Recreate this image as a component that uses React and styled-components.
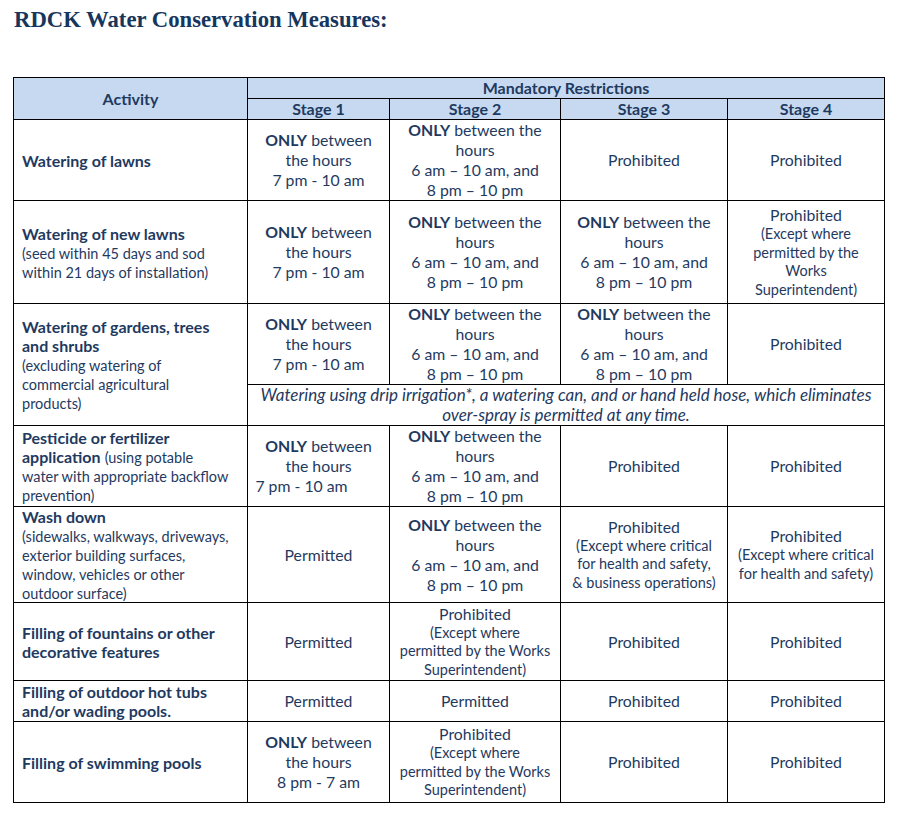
import React from "react";
import styled, { createGlobalStyle } from "styled-components";

const GlobalStyle = createGlobalStyle`
  body {
    margin: 0;
    background: #fff;
  }
`;

const ink = "#1f3a5f";

const Page = styled.div`
  padding: 6px 0 0 13px;
  font-family: Lato, "Open Sans", sans-serif;
  color: ${ink};
`;

const Title = styled.h1`
  margin: 0 0 43px 1px;
  height: 28px;
  font-family: "Liberation Serif", serif;
  font-size: 22.7px;
  line-height: 28px;
  font-weight: bold;
  color: #17365d;
`;

const Table = styled.table`
  border-collapse: collapse;
  table-layout: fixed;
  width: 872px;
  td,
  th {
    border: 1px solid #000;
    padding: 0;
  }
`;

const HeadCell = styled.th`
  background: #c6d9f1;
  height: 20px;
  font-size: 16px;
  line-height: 20px;
  font-weight: bold;
  text-align: center;
  vertical-align: middle;
`;

const Row = styled.tr`
  height: ${(p) => p.$h}px;
`;

const ActivityCell = styled.td`
  padding: 0 4px 0 8px !important;
  font-size: 16px;
  line-height: 19px;
  vertical-align: middle;
  b {
    font-weight: bold;
  }
`;

const Sub = styled.span`
  font-size: 14.5px;
  line-height: 1;
`;

const StageCell = styled.td`
  font-size: 15.8px;
  line-height: 20px;
  text-align: center;
  vertical-align: middle;
  b {
    font-weight: bold;
  }
`;

const Small = styled.span`
  display: block;
  font-size: 14.5px;
  line-height: 18.5px;
`;

const Shift = styled.span`
  margin-right: 34px;
`;

const NoteCell = styled.td`
  height: 40px;
  font-size: 17px;
  line-height: 20px;
  font-style: italic;
  text-align: center;
  vertical-align: middle;
`;

const Stage1 = ({ to = "7 pm - 10 am", shift }) => (
  <>
    <b>ONLY</b> between
    <br />
    the hours
    <br />
    {shift ? <Shift>{to}</Shift> : to}
  </>
);

const Stage2 = () => (
  <>
    <b>ONLY</b> between the
    <br />
    hours
    <br />
    6 am – 10 am, and
    <br />8 pm – 10 pm
  </>
);

const Except = ({ lines }) => (
  <>
    Prohibited
    <Small>
      {lines.map((l, i) => (
        <React.Fragment key={i}>
          {i > 0 && <br />}
          {l}
        </React.Fragment>
      ))}
    </Small>
  </>
);

const worksLong = ["(Except where", "permitted by the", "Works", "Superintendent)"];
const worksShort = ["(Except where", "permitted by the Works", "Superintendent)"];

const App = () => {
  return (
    <Page>
      <GlobalStyle />
      <Title>RDCK Water Conservation Measures:</Title>
      <Table>
        <colgroup>
          <col style={{ width: 234 }} />
          <col style={{ width: 142 }} />
          <col style={{ width: 171 }} />
          <col style={{ width: 167 }} />
          <col style={{ width: 157 }} />
        </colgroup>
        <thead>
          <tr>
            <HeadCell rowSpan={2}>Activity</HeadCell>
            <HeadCell colSpan={4}>Mandatory Restrictions</HeadCell>
          </tr>
          <tr>
            <HeadCell>Stage 1</HeadCell>
            <HeadCell>Stage 2</HeadCell>
            <HeadCell>Stage 3</HeadCell>
            <HeadCell>Stage 4</HeadCell>
          </tr>
        </thead>
        <tbody>
          <Row $h={80}>
            <ActivityCell>
              <b>Watering of lawns</b>
            </ActivityCell>
            <StageCell>
              <Stage1 />
            </StageCell>
            <StageCell>
              <Stage2 />
            </StageCell>
            <StageCell>Prohibited</StageCell>
            <StageCell>Prohibited</StageCell>
          </Row>
          <Row $h={103}>
            <ActivityCell>
              <b>Watering of new lawns</b>
              <br />
              <Sub>
                (seed within 45 days and sod
                <br />
                within 21 days of installation)
              </Sub>
            </ActivityCell>
            <StageCell>
              <Stage1 />
            </StageCell>
            <StageCell>
              <Stage2 />
            </StageCell>
            <StageCell>
              <Stage2 />
            </StageCell>
            <StageCell>
              <Except lines={worksLong} />
            </StageCell>
          </Row>
          <Row $h={80}>
            <ActivityCell rowSpan={2}>
              <b>
                Watering of gardens, trees
                <br />
                and shrubs
              </b>
              <br />
              <Sub>
                (excluding watering of
                <br />
                commercial agricultural
                <br />
                products)
              </Sub>
            </ActivityCell>
            <StageCell>
              <Stage1 />
            </StageCell>
            <StageCell>
              <Stage2 />
            </StageCell>
            <StageCell>
              <Stage2 />
            </StageCell>
            <StageCell>Prohibited</StageCell>
          </Row>
          <tr>
            <NoteCell colSpan={4}>
              Watering using drip irrigation*, a watering can, and or hand held hose, which eliminates
              <br />
              over-spray is permitted at any time.
            </NoteCell>
          </tr>
          <Row $h={80}>
            <ActivityCell>
              <b>
                Pesticide or fertilizer
                <br />
                application
              </b>{" "}
              <Sub>
                (using potable
                <br />
                water with appropriate backflow
                <br />
                prevention)
              </Sub>
            </ActivityCell>
            <StageCell>
              <Stage1 shift />
            </StageCell>
            <StageCell>
              <Stage2 />
            </StageCell>
            <StageCell>Prohibited</StageCell>
            <StageCell>Prohibited</StageCell>
          </Row>
          <Row $h={95}>
            <ActivityCell>
              <b>Wash down</b>
              <br />
              <Sub>
                (sidewalks, walkways, driveways,
                <br />
                exterior building surfaces,
                <br />
                window, vehicles or other
                <br />
                outdoor surface)
              </Sub>
            </ActivityCell>
            <StageCell>Permitted</StageCell>
            <StageCell>
              <Stage2 />
            </StageCell>
            <StageCell>
              <Except
                lines={["(Except where critical", "for health and safety,", "& business operations)"]}
              />
            </StageCell>
            <StageCell>
              <Except lines={["(Except where critical", "for health and safety)"]} />
            </StageCell>
          </Row>
          <Row $h={78}>
            <ActivityCell>
              <b>
                Filling of fountains or other
                <br />
                decorative features
              </b>
            </ActivityCell>
            <StageCell>Permitted</StageCell>
            <StageCell>
              <Except lines={worksShort} />
            </StageCell>
            <StageCell>Prohibited</StageCell>
            <StageCell>Prohibited</StageCell>
          </Row>
          <Row $h={41}>
            <ActivityCell>
              <b>
                Filling of outdoor hot tubs
                <br />
                and/or wading pools.
              </b>
            </ActivityCell>
            <StageCell>Permitted</StageCell>
            <StageCell>Permitted</StageCell>
            <StageCell>Prohibited</StageCell>
            <StageCell>Prohibited</StageCell>
          </Row>
          <Row $h={81}>
            <ActivityCell>
              <b>Filling of swimming pools</b>
            </ActivityCell>
            <StageCell>
              <Stage1 to="8 pm - 7 am" />
            </StageCell>
            <StageCell>
              <Except lines={worksShort} />
            </StageCell>
            <StageCell>Prohibited</StageCell>
            <StageCell>Prohibited</StageCell>
          </Row>
        </tbody>
      </Table>
    </Page>
  );
};

export default App;
